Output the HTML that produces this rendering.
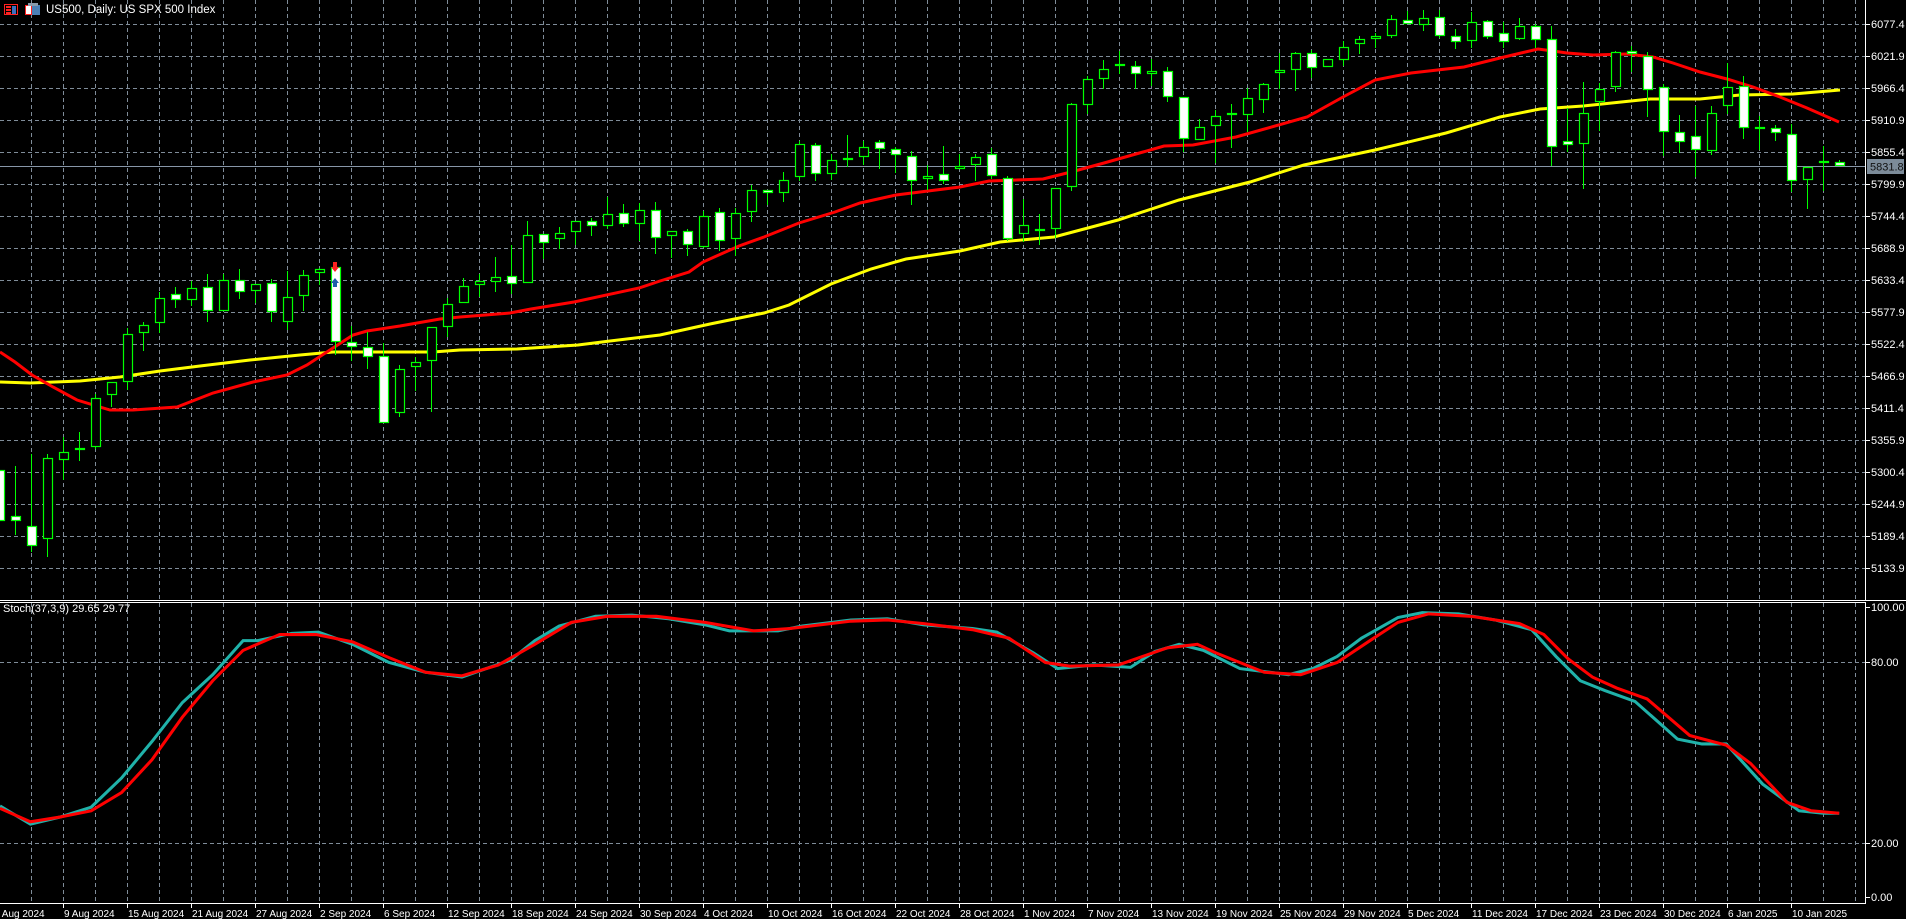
<!DOCTYPE html>
<html><head><meta charset="utf-8"><style>
html,body{margin:0;padding:0;background:#000;width:1906px;height:919px;overflow:hidden}
svg{display:block}
text{font-family:"Liberation Sans",sans-serif;font-size:11px;fill:#fff}
.tl text{font-size:10px}
</style></head><body>
<svg id="s" width="1906" height="919" viewBox="0 0 1906 919" xmlns="http://www.w3.org/2000/svg">
<defs>
<clipPath id="cm"><rect x="0" y="0" width="1865" height="600"/></clipPath>
<clipPath id="ci"><rect x="0" y="603" width="1865" height="300"/></clipPath>
</defs>
<rect width="1906" height="919" fill="#000"/>
<g id="grid" stroke="#7f8c99" stroke-width="1" stroke-dasharray="4,3" shape-rendering="crispEdges"></g>
<line x1="0" y1="166.5" x2="1865" y2="166.5" stroke="#8796a8" stroke-width="1"/>
<g clip-path="url(#cm)">
<polyline fill="none" stroke="#ffff00" stroke-width="3" points="0,382 30,383 80,381 120,377 160,371 200,366 250,360 300,355 333,352 367,352 433,352 460,350 517,349 578,345 610,341 660,335 710,324 764,313 789,305 831,284 871,269 906,259 960,251 1000,242 1054,237 1118,220 1179,200 1250,182 1304,165 1375,150 1446,133 1500,117 1540,109 1583,106 1650,99 1700,99 1740,95 1793,94 1840,90"/>
<polyline fill="none" stroke="#ff0000" stroke-width="3" points="0,352 15,362 32,375 53,387 77,400 110,410 133,410 177,407 213,393 253,382 287,375 307,365 333,348 353,335 367,331 400,326 440,319 460,317 510,313 531,309 574,302 639,288 660,281 689,272 703,262 739,246 764,237 799,223 835,212 860,203 896,195 960,187 989,181 1043,179 1071,172 1104,163 1143,152 1164,146 1193,145 1236,137 1307,117 1343,97 1375,80 1411,73 1464,67 1500,58 1538,49 1553,51 1567,53 1593,55 1627,54 1653,57 1673,63 1700,72 1727,79 1753,87 1780,97 1807,108 1839,122"/>
<g id="candles"></g>
<path d="M331,267 h8 l-4,5 z M333,262 h4 v5 h-4 z" fill="#ff2020"/>
<path d="M331,283 h8 l-4,-5 z M333,283 h4 v4 h-4 z" fill="#1f5fa8"/>
</g>
<g clip-path="url(#ci)">
<g transform="scale(1.2156)">
<polyline fill="none" stroke="#20b2aa" stroke-width="2.5" points="0,663 25,678 50,672 75,664 100,640 125,610 150,578 175,555 200,527 212,527 240,521 262,520 290,530 320,545 350,553 380,557 400,550 420,543 440,527 460,515 490,507 520,506 550,509 580,514 600,519 640,519 660,515 700,510 730,509 760,514 800,517 820,520 850,537 870,550 900,547 930,549 950,536 970,530 990,535 1020,550 1060,555 1080,550 1100,540 1120,525 1150,508 1170,504 1200,505 1230,510 1260,518 1280,540 1300,560 1320,568 1345,577 1380,608 1400,612 1420,612 1450,645 1480,667 1500,669 1513,669"/>
<polyline fill="none" stroke="#ff0000" stroke-width="2.5" points="0,665 25,676 50,672 75,667 100,652 125,625 150,590 175,560 200,535 230,522 260,522 290,528 320,541 350,553 380,556 410,547 440,530 470,512 500,507 540,507 580,512 620,519 650,517 700,511 730,510 760,513 800,518 830,525 860,545 880,548 920,547 960,533 985,530 1000,537 1040,553 1070,555 1100,545 1130,525 1150,512 1175,505 1210,507 1250,513 1270,522 1290,542 1310,557 1330,566 1355,575 1390,605 1420,613 1440,628 1470,660 1490,667 1513,669"/>
</g>
</g>
<g stroke="#fff" stroke-width="1" shape-rendering="crispEdges">
<line x1="1865.5" y1="0" x2="1865.5" y2="600"/>
<line x1="0" y1="600.5" x2="1906" y2="600.5"/>
<line x1="0" y1="602.5" x2="1865" y2="602.5"/>
<line x1="1865.5" y1="602" x2="1865.5" y2="904"/>
<line x1="0" y1="903.5" x2="1866" y2="903.5"/>
<g id="ticks"></g>
</g>
<rect x="1867" y="159" width="37" height="15" fill="#7c8b99"/>
<text x="1870" y="170.5" style="fill:#111">5831.8</text>
<g>
<text x="1871" y="28">6077.4</text><text x="1871" y="60">6021.9</text><text x="1871" y="92">5966.4</text><text x="1871" y="124">5910.9</text><text x="1871" y="156">5855.4</text><text x="1871" y="188">5799.9</text><text x="1871" y="220">5744.4</text><text x="1871" y="252">5688.9</text><text x="1871" y="284">5633.4</text><text x="1871" y="316">5577.9</text><text x="1871" y="348">5522.4</text><text x="1871" y="380">5466.9</text><text x="1871" y="412">5411.4</text><text x="1871" y="444">5355.9</text><text x="1871" y="476">5300.4</text><text x="1871" y="508">5244.9</text><text x="1871" y="540">5189.4</text><text x="1871" y="572">5133.9</text>
<text x="1871" y="611">100.00</text><text x="1871" y="666">80.00</text><text x="1871" y="847">20.00</text><text x="1871" y="901">0.00</text>
</g>
<text x="3" y="612">Stoch(37,3,9) 29.65 29.77</text>
<rect x="4.5" y="4.5" width="13" height="10" fill="none" stroke="#ff2020"/>
<rect x="6" y="6" width="5" height="2" fill="#ff2020"/><rect x="12" y="6" width="4" height="8" fill="#3a6fbf"/>
<rect x="6" y="9" width="5" height="2" fill="#ff2020"/><rect x="6" y="12" width="5" height="2" fill="#ff2020"/>
<rect x="25.5" y="5.5" width="6" height="9" fill="#fff" stroke="#ff2020"/>
<rect x="32" y="5" width="8" height="10" fill="#4a7fb5"/><rect x="28" y="3" width="10" height="3" fill="#8899aa"/>
<text x="46" y="13" style="font-size:11.5px">US500, Daily:  US SPX 500 Index</text>
<g class="tl">
<text x="-6" y="917">5 Aug 2024</text><text x="64" y="917">9 Aug 2024</text><text x="128" y="917">15 Aug 2024</text><text x="192" y="917">21 Aug 2024</text><text x="256" y="917">27 Aug 2024</text><text x="320" y="917">2 Sep 2024</text><text x="384" y="917">6 Sep 2024</text><text x="448" y="917">12 Sep 2024</text><text x="512" y="917">18 Sep 2024</text><text x="576" y="917">24 Sep 2024</text><text x="640" y="917">30 Sep 2024</text><text x="704" y="917">4 Oct 2024</text><text x="768" y="917">10 Oct 2024</text><text x="832" y="917">16 Oct 2024</text><text x="896" y="917">22 Oct 2024</text><text x="960" y="917">28 Oct 2024</text><text x="1024" y="917">1 Nov 2024</text><text x="1088" y="917">7 Nov 2024</text><text x="1152" y="917">13 Nov 2024</text><text x="1216" y="917">19 Nov 2024</text><text x="1280" y="917">25 Nov 2024</text><text x="1344" y="917">29 Nov 2024</text><text x="1408" y="917">5 Dec 2024</text><text x="1472" y="917">11 Dec 2024</text><text x="1536" y="917">17 Dec 2024</text><text x="1600" y="917">23 Dec 2024</text><text x="1664" y="917">30 Dec 2024</text><text x="1728" y="917">6 Jan 2025</text><text x="1792" y="917">10 Jan 2025</text>
</g>
</svg>
<script>
(function(){
var NS="http://www.w3.org/2000/svg";
function el(p,t,a){var e=document.createElementNS(NS,t);for(var k in a)e.setAttribute(k,a[k]);p.appendChild(e);return e;}
var g=document.getElementById('grid');
for(var j=0;j<18;j++){var y=24.5+32*j;el(g,'line',{x1:0,y1:y,x2:1865,y2:y});}
el(g,'line',{x1:0,y1:662.5,x2:1865,y2:662.5});
el(g,'line',{x1:0,y1:843.5,x2:1865,y2:843.5});
for(var m=0;m<58;m++){var x=31.5+32*m;el(g,'line',{x1:x,y1:0,x2:x,y2:600});el(g,'line',{x1:x,y1:603,x2:x,y2:903});}
var t=document.getElementById('ticks');
for(var j=0;j<18;j++){var y=24.5+32*j;el(t,'line',{x1:1865,y1:y,x2:1870,y2:y});}
[607.5,662.5,843.5,897.5].forEach(function(y){el(t,'line',{x1:1865,y1:y,x2:1870,y2:y});});
for(var n=0;n<29;n++){var x=-0.5+64*n;el(t,'line',{x1:x,y1:903,x2:x,y2:908});}
var D="W 470 521 466 535|W 516 521 466 535|W 526 546 454 552|B 458 539 454 557|B 452 460 437 480|B 448 450 432 461|B 398 447 394 449|B 382 395 382 407|B 334 382 328 390|B 325 333 322 351|B 298 323 292 333|W 294 300 287 308|B 288 300 281 306|W 287 311 274 322|B 280 311 274 311|W 280 292 269 299|B 284 291 284 303|W 283 312 279 322|B 297 322 271 330|B 275 296 270 311|B 269 273 268 285|W 267 342 266 355|W 342 347 326 361|W 347 357 332 369|W 356 423 343 423|B 369 413 365 417|B 362 367 357 391|B 327 361 327 412|B 304 327 298 337|B 286 303 278 303|B 281 285 274 297|B 277 282 257 292|W 276 284 245 294|B 235 283 221 283|W 234 243 234 259|B 233 239 227 249|B 221 232 221 245|W 221 226 218 236|B 214 226 197 229|W 213 224 204 227|B 210 224 203 241|W 210 238 202 254|B 231 236 231 258|W 231 245 229 256|B 216 247 211 248|W 212 241 208 251|B 213 239 208 256|B 190 212 185 222|W 190 193 190 205|B 180 193 172 202|B 144 177 141 181|W 145 174 143 181|B 160 174 154 180|B 158 160 135 167|B 147 157 141 165|W 142 149 140 169|W 149 155 147 173|W 156 181 151 205|B 176 179 165 190|W 174 181 146 184|B 166 169 154 169|B 157 165 154 181|W 154 176 148 179|W 178 239 176 241|B 225 234 199 242|W 229 231 214 245|B 188 229 188 238|B 104 187 103 191|B 79 105 76 114|B 69 79 60 89|B 64 65 51 74|W 66 74 61 89|B 71 74 59 86|W 71 97 67 102|W 97 139 97 152|B 127 140 119 140|B 116 126 110 163|B 113 115 104 148|B 98 115 88 132|B 84 100 83 113|B 70 73 53 89|B 53 70 52 91|W 53 68 50 78|B 59 67 59 67|B 47 60 41 66|B 39 44 36 54|B 36 39 33 48|B 19 36 15 38|W 20 24 11 24|B 18 25 10 31|W 17 36 10 38|W 36 42 29 49|B 22 41 12 48|W 21 37 20 39|W 33 42 22 48|B 26 39 18 40|W 26 40 24 48|W 39 147 26 166|W 141 145 108 152|B 113 144 82 189|B 89 102 83 131|B 52 87 51 92|W 51 54 46 72|W 56 90 52 117|W 87 132 84 156|W 132 142 115 153|W 136 150 106 177|B 113 151 106 155|B 87 106 63 114|W 86 128 76 139|B 127 128 116 150|W 128 133 125 141|W 134 181 124 192|B 167 180 167 209|B 161 163 146 191|W 162 166 160 166".split('|');
var c=document.getElementById('candles');
D.forEach(function(s,k){var a=s.split(' ');var x=-1+16*k;var bt=+a[1],bb=+a[2],wt=+a[3],wb=+a[4];
el(c,'line',{x1:x+0.5,y1:wt,x2:x+0.5,y2:wb,stroke:'#00ff00','stroke-width':1});
el(c,'rect',{x:x-3.5,y:bt+0.5,width:9,height:Math.max(bb-bt-1,1),fill:a[0]=='W'?'#fff':'#000',stroke:'#00ff00','stroke-width':1.2});
});
})();
</script>
</body></html>
